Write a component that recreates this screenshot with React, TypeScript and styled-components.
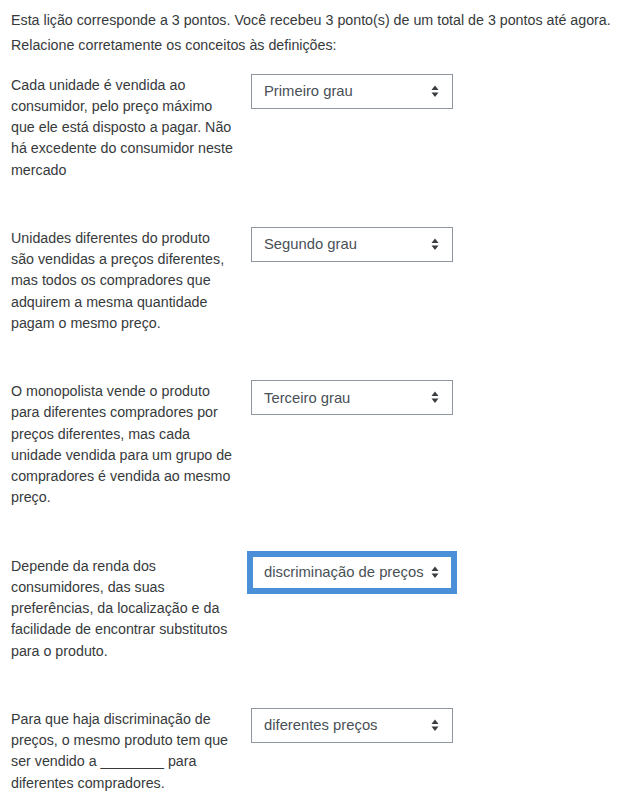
import React from 'react'
import styled, { createGlobalStyle, css } from 'styled-components'

const GlobalStyle = createGlobalStyle`
  html, body {
    margin: 0;
    padding: 0;
    background: #fff;
  }
  body {
    font-family: "Liberation Sans", Arial, sans-serif;
    font-size: 14.25px;
    line-height: 21.25px;
    color: #373a3c;
  }
`

const Page = styled.div`
  padding: 10px 11px 0 11px;
`

const Intro = styled.p`
  margin: 0 0 4px 0;
`

const Lead = styled.p`
  margin: 0 0 18px 0;
`

const Row = styled.div`
  display: grid;
  grid-template-columns: 224px 202px;
  column-gap: 16px;
  align-items: start;
  margin-bottom: 47px;
`

const Label = styled.label`
  display: block;
`

const SelectWrap = styled.div`
  position: relative;
  width: 202px;
  height: 35px;
  margin-top: -1px;
`

const Select = styled.select<{ $focused?: boolean }>`
  appearance: none;
  -webkit-appearance: none;
  box-sizing: border-box;
  width: 100%;
  height: 100%;
  margin: 0;
  padding: 0 18px 0 12px;
  font-family: inherit;
  font-size: 14.8px;
  color: #495057;
  background: #fff;
  border: 1px solid #8f959e;
  border-radius: 0;
  outline: none;
  ${(p) =>
    p.$focused &&
    css`
      border: 2px solid #4a8fd8;
      padding-left: 11px;
      box-shadow: 0 0 0 4px #4a8fd8;
    `};
`

const Arrow = styled.svg`
  position: absolute;
  right: 14px;
  top: 11px;
  width: 8px;
  height: 13px;
  pointer-events: none;
`

const options = [
  'Primeiro grau',
  'Segundo grau',
  'Terceiro grau',
  'discriminação de preços',
  'diferentes preços',
]

const rows = [
  {
    text: 'Cada unidade é vendida ao consumidor, pelo preço máximo que ele está disposto a pagar. Não há excedente do consumidor neste mercado',
    value: 'Primeiro grau',
  },
  {
    text: 'Unidades diferentes do produto são vendidas a preços diferentes, mas todos os compradores que adquirem a mesma quantidade pagam o mesmo preço.',
    value: 'Segundo grau',
  },
  {
    text: 'O monopolista vende o produto para diferentes compradores por preços diferentes, mas cada unidade vendida para um grupo de compradores é vendida ao mesmo preço.',
    value: 'Terceiro grau',
  },
  {
    text: 'Depende da renda dos consumidores, das suas preferências, da localização e da facilidade de encontrar substitutos para o produto.',
    value: 'discriminação de preços',
    focused: true,
  },
  {
    text: 'Para que haja discriminação de preços, o mesmo produto tem que ser vendido a ________ para diferentes compradores.',
    value: 'diferentes preços',
  },
]

const SortIcon = () => (
  <Arrow viewBox="0 0 8 13">
    <path d="M4 0.5 L7.5 5 L0.5 5 Z" fill="#3a3d40" />
    <path d="M0.5 7.5 L7.5 7.5 L4 12 Z" fill="#3a3d40" />
  </Arrow>
)

export default function App() {
  return (
    <Page>
      <GlobalStyle />
      <Intro>
        Esta lição corresponde a 3 pontos. Você recebeu 3 ponto(s) de um total de 3 pontos até agora.
      </Intro>
      <Lead>Relacione corretamente os conceitos às definições:</Lead>
      {rows.map((r, i) => (
        <Row key={i}>
          <Label htmlFor={`resp-${i}`}>{r.text}</Label>
          <SelectWrap>
            <Select id={`resp-${i}`} defaultValue={r.value} $focused={r.focused}>
              {options.map((o) => (
                <option key={o} value={o}>
                  {o}
                </option>
              ))}
            </Select>
            <SortIcon />
          </SelectWrap>
        </Row>
      ))}
    </Page>
  )
}
